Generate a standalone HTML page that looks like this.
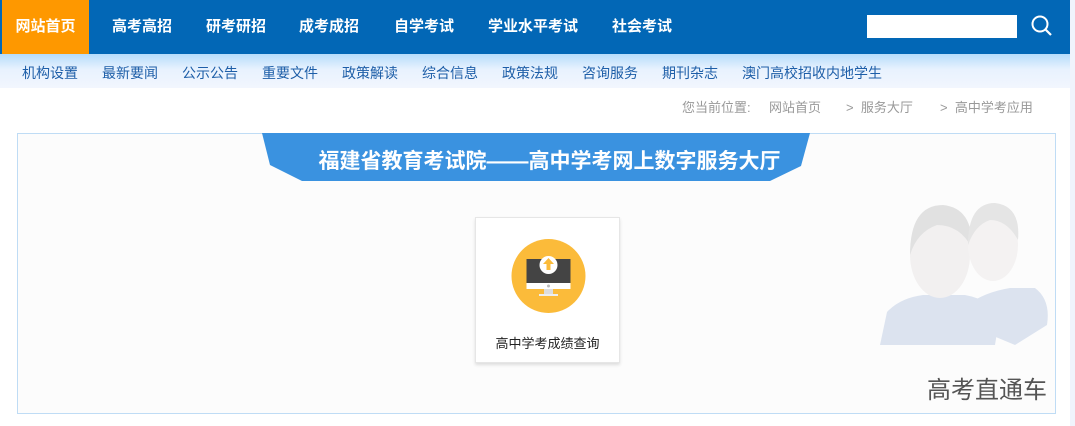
<!DOCTYPE html>
<html><head><meta charset="utf-8"><style>
*{margin:0;padding:0;box-sizing:border-box}
body{width:1075px;height:426px;background:#f0f4fc;font-family:"Liberation Sans","Noto Sans CJK SC",sans-serif;position:relative;overflow:hidden}
.wrap{position:absolute;left:0;top:0;width:1070px;height:426px;background:#fff}
.top{position:absolute;left:0;top:0;width:1070px;height:54px;background:#0267b6}
.top a{position:absolute;top:0;height:54px;line-height:54px;color:#fff;font-size:15px;font-weight:bold}
.home{background:#fe9800;left:2px;width:87px;text-align:center}
.search{position:absolute;left:867px;top:15px;width:150px;height:23px;background:#fff}
.sub{position:absolute;left:0;top:54px;width:1070px;height:34px;background:linear-gradient(#b6dcfb,#e8f2fe 45%,#f2f6fe)}
.sub span{position:absolute;top:9px;font-size:14px;color:#1d5ea8}
.crumb{position:absolute;top:97px;font-size:13px;color:#999}
.box{position:absolute;left:17px;top:133px;width:1039px;height:281px;border:1px solid #bfdcf5;background:#fcfcfc}
.title{position:absolute;width:1075px;text-align:center;font-size:21px;font-weight:bold;color:#fff}
.card{position:absolute;left:475px;top:217px;width:145px;height:146px;background:#fff;border:1px solid #e6e6e6;box-shadow:0 2px 3px rgba(0,0,0,.12)}
.card p{position:absolute;top:115px;width:100%;text-align:center;font-size:13px;color:#222}
</style></head><body>
<div class="wrap">
<div class="top">
<a class="home">网站首页</a>
<a style="left:112px">高考高招</a>
<a style="left:206px">研考研招</a>
<a style="left:299px">成考成招</a>
<a style="left:394px">自学考试</a>
<a style="left:488px">学业水平考试</a>
<a style="left:612px">社会考试</a>
<div class="search"></div>
<svg style="position:absolute;left:1030px;top:14px" width="24" height="24" viewBox="0 0 24 24"><circle cx="10" cy="10" r="7.5" fill="none" stroke="#fff" stroke-width="2"/><path d="M15.5 15.5L21 21" stroke="#fff" stroke-width="2.2"/></svg>
</div>
<div class="sub">
<span style="left:22px">机构设置</span><span style="left:102px">最新要闻</span><span style="left:182px">公示公告</span><span style="left:262px">重要文件</span><span style="left:342px">政策解读</span><span style="left:422px">综合信息</span><span style="left:502px">政策法规</span><span style="left:582px">咨询服务</span><span style="left:662px">期刊杂志</span><span style="left:742px">澳门高校招收内地学生</span>
</div>
<div class="crumb" style="left:682px">您当前位置:</div>
<div class="crumb" style="left:769px">网站首页</div>
<div class="crumb" style="left:846px">&gt;&nbsp;&nbsp;服务大厅</div>
<div class="crumb" style="left:940px">&gt;&nbsp;&nbsp;高中学考应用</div>
<div class="box"></div>
<svg style="position:absolute;left:0;top:133px" width="1075" height="50"><polygon points="262,0 810,0 801,33 770,48 302,48 270,32" fill="#3a92e0"/></svg>
<div class="title" style="top:145px;left:12px">福建省教育考试院——高中学考网上数字服务大厅</div>
<div class="card">
<svg style="position:absolute;left:35px;top:20px" width="75" height="76" viewBox="0 0 75 76">
<circle cx="37.5" cy="38" r="37" fill="#fbbb3a"/>
<rect x="15.5" y="21" width="44" height="24" fill="#444"/>
<rect x="15.5" y="45" width="44" height="6" fill="#fff"/>
<circle cx="37.5" cy="48" r="1.5" fill="#bbb"/>
<rect x="33" y="51" width="9" height="5" fill="#ddd"/>
<rect x="28" y="56" width="19" height="2" fill="#eee"/>
<circle cx="37.5" cy="27" r="9" fill="#fff"/>
<path d="M37.5 20l-5.5 6h3.5v6h4v-6h3.5z" fill="#fbbb3a"/>
</svg>
<p>高中学考成绩查询</p>
</div>
<svg style="position:absolute;left:875px;top:200px" width="175" height="145" viewBox="0 0 175 145" opacity=".6">
<path d="M5 145 L12 112 Q25 98 48 95 L90 95 Q118 100 124 120 L120 145Z" fill="#c8d4e8"/>
<path d="M80 120 L92 105 Q110 92 135 88 L160 88 Q176 100 172 125 L140 145Z" fill="#c8d4e8"/>
<ellipse cx="65" cy="55" rx="30" ry="43" fill="#ece9e9"/>
<path d="M35 55 Q35 5 68 5 Q98 8 97 48 Q85 25 62 25 Q42 32 35 55Z" fill="#d0d0d0"/>
<ellipse cx="118" cy="45" rx="25" ry="36" fill="#efecec"/>
<path d="M93 45 Q93 3 120 3 Q146 6 143 40 Q132 20 115 20 Q100 25 93 45Z" fill="#d6d6d6"/>
</svg>
<div style="position:absolute;left:927px;top:370px;font-size:24px;color:#555">高考直通车</div>
</div>
</body></html>
